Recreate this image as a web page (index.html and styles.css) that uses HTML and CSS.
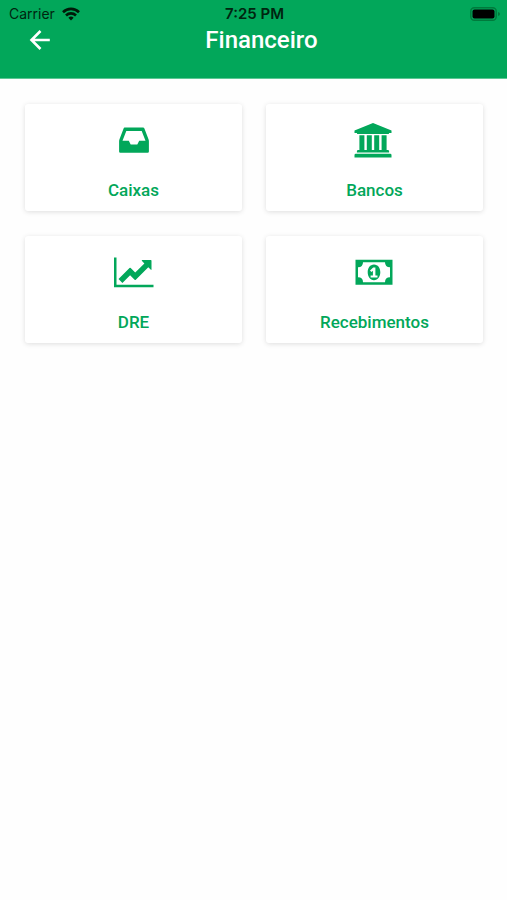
FILE: index.html
```html
<!DOCTYPE html>
<html lang="pt-BR">
<head>
<meta charset="utf-8">
<meta name="viewport" content="width=device-width, initial-scale=1">
<title>Financeiro</title>
<link rel="stylesheet" href="styles.css">
</head>
<body>
<header class="header">
  <div class="status">
    <div class="carrier">
      <span>Carrier</span>
      <svg width="18" height="14" viewBox="0 0 18 14" fill="none" stroke="#001a08" stroke-width="2.600" aria-hidden="true">
        <path d="M1 5.200C5.500.8 12.500.8 17 5.200"/>
        <path d="M4 8.500C6.800 5.700 11.200 5.700 14 8.500"/>
        <path d="M6.400 10.700Q9 8.500 11.600 10.700L9 13.500Z" fill="#001a08" stroke="none"/>
      </svg>
    </div>
    <time class="clock">7:25 PM</time>
    <div class="power">
      <svg width="30" height="14" viewBox="0 0 30 14" aria-hidden="true">
        <rect x=".8" y=".8" width="25.400" height="12.400" rx="3.500" fill="none" stroke="#007a3c" stroke-width="1.400"/>
        <rect x="2.500" y="2.500" width="22" height="9" rx="2" fill="#000"/>
        <path d="M28 5v4q2-.5 2-2t-2-2z" fill="#007a3c"/>
      </svg>
    </div>
  </div>
  <div class="bar">
    <button class="back" type="button" aria-label="Voltar">
      <svg width="22" height="22" viewBox="0 0 22 22" fill="none" stroke="#fff" stroke-width="2.600" aria-hidden="true"><path d="M20.800 11H3M11.500 2 2.500 11l9 9"/></svg>
    </button>
    <h1 class="title">Financeiro</h1>
  </div>
</header>
<main class="grid">
  <a class="card" href="#caixas">
    <svg class="icon" viewBox="0 0 44 44" aria-hidden="true"><path fill-rule="evenodd" d="M12.500 9.500h18.500q1 0 1.400 1l4.100 10.800q.4 1 .4 2v10.200q0 1.200-1.200 1.200H8.300q-1.200 0-1.200-1.200V23.300q0-1 .4-2l4.100-10.800q.4-1 .9-1zM14.300 13l-3.800 9.700h6.300l1.900 3.800h6.600l1.900-3.800h6.300L29.700 13z"/></svg>
    <span class="label">Caixas</span>
  </a>
  <a class="card" href="#bancos">
    <svg class="icon" viewBox="0 0 44 44" aria-hidden="true"><path d="M20 5l18.500 7.400v2.500h-2.400q0 1.200-1.400 1.200H5.300q-1.400 0-1.400-1.200H1.500v-2.500zM6.400 17.300h5v14.800h2.400V17.300h5v14.800h2.400V17.300h5v14.800h2.400V17.300h5v14.800h1.100q1.400 0 1.400 1.200v1.300H3.900v-1.300q0-1.200 1.400-1.200h1.100zM2.900 35.800h34.200q1.400 0 1.400 1.200v2.500h-37V37q0-1.200 1.400-1.200z"/></svg>
    <span class="label">Bancos</span>
  </a>
  <a class="card" href="#dre">
    <svg class="icon" viewBox="0 0 44 44" aria-hidden="true"><path d="M2 7.500h2.500v27.300H41.500v2.500H2zM39.500 10.500v8.800q0 1.100-.9.300l-2.300-2.300-12.500 12.500q-.6.600-1.200 0l-4.500-4.500-7.700 7.700-3.900-3.900 11-11q.6-.6 1.200 0l4.500 4.500 9.200-9.200-2.400-2.400q-.8-.9.300-.9h8.600q.6 0 .6.400z"/></svg>
    <span class="label">DRE</span>
  </a>
  <a class="card" href="#recebimentos">
    <svg class="icon" viewBox="0 0 44 44" aria-hidden="true"><path fill-rule="evenodd" d="M2.500 9.800h37v25h-37zM10 12.300q0 5-5 5v10q5 0 5 5h22q0-5 5-5v-10q-5 0-5-5zM21 14.500c4 0 6.300 3.600 6.300 7.800s-2.300 7.900-6.300 7.900-6.300-3.700-6.300-7.900 2.300-7.800 6.300-7.800zM20.200 17.400l-3.200 3 1.500 1.600 1.400-1.200v4.600h-2.300v2h6.900v-2h-2.100v-8z"/></svg>
    <span class="label">Recebimentos</span>
  </a>
</main>
</body>
</html>
```
FILE: styles.css
```css
* {
  box-sizing: border-box;
}

body {
  margin: 0;
  background: #fefefe;
  font-family: Roboto, "Liberation Sans", sans-serif;
}

.header {
  padding-bottom: 22px;
  border-bottom: 1px solid #5cc794;
  background: #02a75a;
}

.status {
  display: grid;
  grid-template-columns: 1fr auto 1fr;
  align-items: center;
  height: 24px;
  padding: 4px 7px 0 9px;
  color: #00250f;
  font-family: Inter, sans-serif;
  font-size: 14px;
  line-height: 20px;
}

.carrier {
  display: flex;
  align-items: center;
  gap: 7px;
}

.carrier svg,
.power svg {
  display: block;
}

.clock {
  font-size: 15px;
  font-weight: 600;
}

.power {
  justify-self: end;
}

.bar {
  display: grid;
  grid-template-columns: 48px 1fr 48px;
  align-items: center;
  height: 32px;
  padding: 0 8px 0 24px;
}

.back {
  width: 32px;
  height: 32px;
  padding: 5px;
  border: 0;
  background: none;
}

.back svg {
  display: block;
}

.title {
  margin: 0;
  color: #fff;
  font-size: 24px;
  font-weight: 500;
  line-height: 32px;
  text-align: center;
}

.grid {
  display: grid;
  grid-template-columns: 1fr 1fr;
  gap: 25px 24px;
  padding: 25px 24px 24px 25px;
}

.card {
  display: flex;
  flex-direction: column;
  align-items: center;
  gap: 18px;
  padding: 14px 8px 11px;
  border-radius: 3px;
  background: #fff;
  box-shadow: 0 1px 5px rgba(0, 0, 0, 0.13);
  color: #02a75a;
  text-decoration: none;
}

.icon {
  display: block;
  width: 44px;
  height: 44px;
  fill: #02a75a;
}

.label {
  font-size: 17px;
  font-weight: 500;
  line-height: 20px;
}
```
